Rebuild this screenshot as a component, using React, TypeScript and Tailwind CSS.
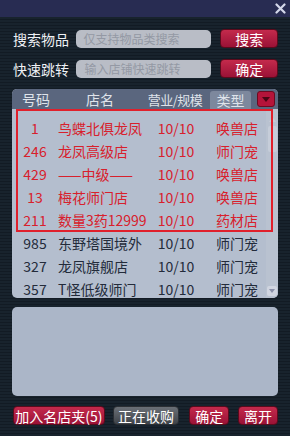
import React from 'react';

type Row = { no: string; name: string; scale: string; type: string; hot?: boolean };

const rows: Row[] = [
    { no: '1', name: '鸟蝶北俱龙凤', scale: '10/10', type: '唤兽店', hot: true },
    { no: '246', name: '龙凤高级店', scale: '10/10', type: '师门宠', hot: true },
    { no: '429', name: '——中级——', scale: '10/10', type: '唤兽店', hot: true },
    { no: '13', name: '梅花师门店', scale: '10/10', type: '唤兽店', hot: true },
    { no: '211', name: '数量3药12999', scale: '10/10', type: '药材店', hot: true },
    { no: '985', name: '东野塔国境外', scale: '10/10', type: '师门宠' },
    { no: '327', name: '龙凤旗舰店', scale: '10/10', type: '师门宠' },
    { no: '357', name: 'T怪低级师门', scale: '10/10', type: '师门宠' },
];

const font = "font-['Noto_Sans_CJK_SC','Noto_Sans',sans-serif]";

const RedButton = ({ children, className = '' }: { children: React.ReactNode; className?: string }) => (
    <button className={`h-[19px] rounded-[4px] border border-[#5a0a1c] bg-[linear-gradient(#c42a4c,#9a1236)] text-[14px] leading-none text-white whitespace-nowrap ${className}`}>
        {children}
    </button>
);

export default function App() {
    return (
        <div className={`w-[290px] h-[436px] overflow-hidden bg-[#16212b] ${font}`}>
            <div className="h-[17px] bg-[#282c52] flex justify-end items-center pr-[4px]">
                {/* close icon */}
                <svg width="11" height="11" viewBox="0 0 11 11">
                    <path d="M1.5 1.5l8 8M9.5 1.5l-8 8" stroke="#d4d8ea" strokeWidth="2.2" strokeLinecap="round" />
                </svg>
            </div>
            <div className="h-[419px] bg-[repeating-linear-gradient(#18232d_0px,#18232d_2px,#121b24_2px,#121b24_3px)] px-[12px] pt-[12px]">
                <div className="flex items-center h-[19px]">
                    <span className="w-[65px] pl-[1px] text-[14px] text-[#eef0f4] leading-none whitespace-nowrap">搜索物品</span>
                    <div className="w-[136px] h-[18px] rounded-[5px] bg-[#b9bdc6] flex items-center pl-[7px] text-[12px] text-[#9499a4] whitespace-nowrap">仅支持物品类搜索</div>
                    <RedButton className="ml-[9px] w-[58px]">搜索</RedButton>
                </div>
                <div className="flex items-center h-[19px] mt-[11px]">
                    <span className="w-[65px] pl-[1px] text-[14px] text-[#eef0f4] leading-none whitespace-nowrap">快速跳转</span>
                    <div className="w-[136px] h-[18px] rounded-[5px] bg-[#b9bdc6] flex items-center pl-[8px] text-[12px] text-[#9499a4] whitespace-nowrap">输入店铺快速跳转</div>
                    <RedButton className="ml-[9px] w-[58px]">确定</RedButton>
                </div>

                <div className="mt-[11px] h-[209px] rounded-[5px] bg-[#b4bece] overflow-hidden relative">
                    <div className="h-[20px] bg-[#5a667e] flex items-center text-[14px] text-[#dfe3ea] leading-none whitespace-nowrap">
                        <span className="w-[48px] text-center">号码</span>
                        <span className="w-[80px] text-center">店名</span>
                        <span className="w-[70px] text-center text-[13px] tracking-[-0.5px]">营业/规模</span>
                        <span className="w-[41px] h-[18px] mt-[2px] rounded-t-[3px] bg-[#7d889d] flex items-center justify-center">类型</span>
                        <span className="ml-[6px] w-[18px] h-[16px] rounded-[3px] bg-[#b5143a] border border-[#6c0a20] flex items-center justify-center">
                            <svg width="8" height="5" viewBox="0 0 8 5"><path d="M0 0h8L4 5z" fill="#4a0614" /></svg>
                        </span>
                    </div>
                    <div className="flex">
                        <div className="w-[255px] pt-[7px]">
                            {rows.map((r, i) => (
                                <div
                                    key={i}
                                    className={`h-[23px] flex items-center text-[14px] leading-none whitespace-nowrap ${r.hot ? 'text-[#d8202c]' : 'text-[#232b3a]'}`}
                                >
                                    <span className="w-[46px] text-center">{r.no}</span>
                                    <span className="w-[98px]">{r.name}</span>
                                    <span className="w-[40px] text-center">{r.scale}</span>
                                    <span className="pl-[20px]">{r.type}</span>
                                </div>
                            ))}
                        </div>
                        <div className="w-[12px] flex flex-col items-center pt-[8px] pb-[4px] bg-[#b9c2d0]">
                            <svg width="7" height="5" viewBox="0 0 7 5"><path d="M0 5h7L3.5 0z" fill="#c8ccd6" /></svg>
                            <div className="mt-[4px] w-[9px] h-[26px] rounded-[2px] bg-[#c6cdd9]" />
                            <div className="flex-1" />
                            <div className="w-[10px] h-[10px] rounded-[2px] bg-[#d0d5e0] flex items-center justify-center">
                                <svg width="6" height="4" viewBox="0 0 6 4"><path d="M0 0h6L3 4z" fill="#8a90a8" /></svg>
                            </div>
                        </div>
                    </div>
                    <div className="absolute left-[4px] top-[20px] w-[257px] h-[123px] border-2 border-[#e0202c]" />
                </div>

                <div className="mt-[9px] h-[89px] rounded-[5px] bg-[#abb6c8]" />

                <div className="mt-[10px] flex items-center">
                    <RedButton className="w-[92px] ml-[1px]">加入名店夹(5)</RedButton>
                    <button className="ml-[8px] w-[67px] h-[19px] rounded-[4px] border border-[#2a2e33] bg-[linear-gradient(#6a6f76,#3e4349)] text-[14px] leading-none text-white whitespace-nowrap">正在收购</button>
                    <RedButton className="ml-[10px] w-[40px]">确定</RedButton>
                    <RedButton className="ml-[9px] w-[40px]">离开</RedButton>
                </div>
            </div>
        </div>
    );
}
